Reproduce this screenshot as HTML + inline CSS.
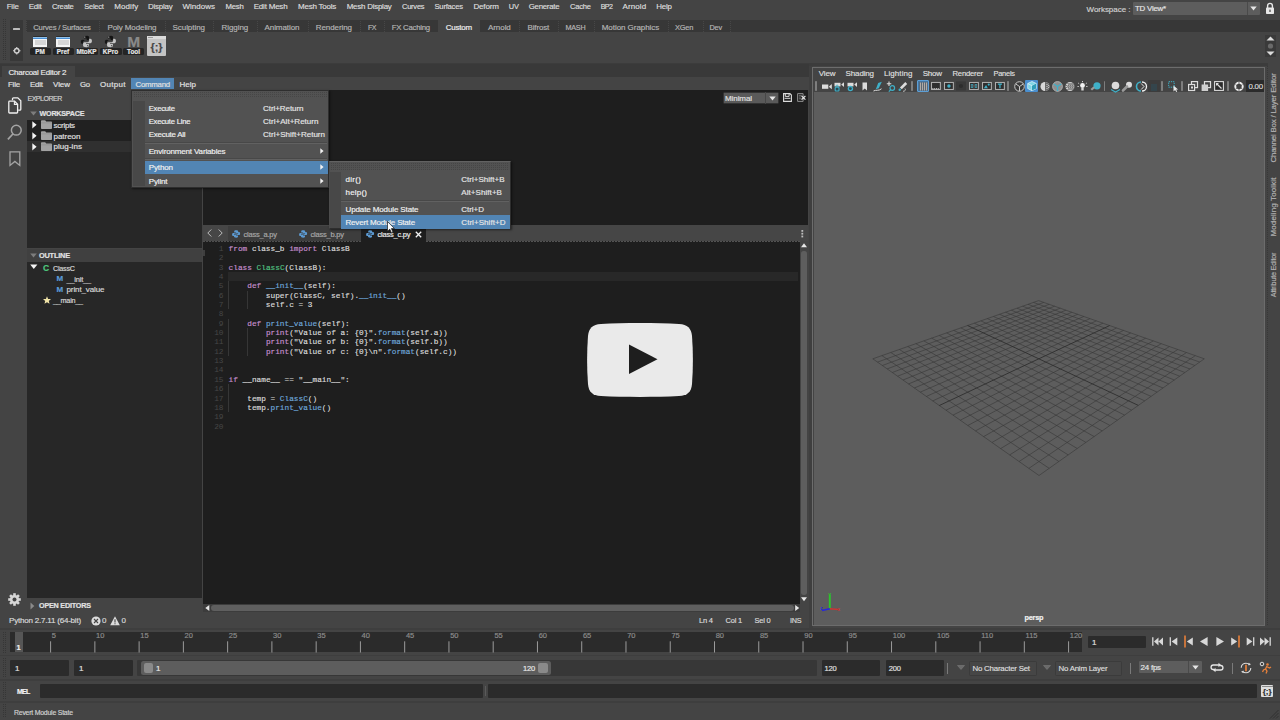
<!DOCTYPE html>
<html><head><meta charset="utf-8"><title>Charcoal Editor 2</title>
<style>
*{box-sizing:border-box;margin:0;padding:0}
html,body{width:1280px;height:720px;overflow:hidden;background:#444;font-family:"Liberation Sans",sans-serif;font-size:8px;color:#d4d4d4}
.a{position:absolute}
.t{position:absolute;white-space:pre;line-height:10px;font-size:8px;color:#d4d4d4;-webkit-text-stroke:0.180px}
.k{color:#c88fd0}.f{color:#6fa8dc}.c{color:#52c282}
svg{overflow:visible}
</style></head><body>
<div class="t" style="left:6.75px;top:1.90px;font-size:7.93px;color:#dcdcdc;letter-spacing:-0.220px;">File</div>
<div class="t" style="left:28.75px;top:1.90px;font-size:7.98px;color:#dcdcdc;letter-spacing:-0.220px;">Edit</div>
<div class="t" style="left:52px;top:1.90px;font-size:7.65px;color:#dcdcdc;letter-spacing:-0.220px;">Create</div>
<div class="t" style="left:84.25px;top:1.90px;font-size:7.45px;color:#dcdcdc;letter-spacing:-0.220px;">Select</div>
<div class="t" style="left:114.25px;top:1.90px;color:#dcdcdc;letter-spacing:0.080px;">Modify</div>
<div class="t" style="left:148px;top:1.90px;font-size:7.91px;color:#dcdcdc;letter-spacing:-0.220px;">Display</div>
<div class="t" style="left:182.5px;top:1.90px;color:#dcdcdc;letter-spacing:0.007px;">Windows</div>
<div class="t" style="left:225.5px;top:1.90px;font-size:7.78px;color:#dcdcdc;letter-spacing:-0.220px;">Mesh</div>
<div class="t" style="left:253.75px;top:1.90px;color:#dcdcdc;letter-spacing:-0.215px;">Edit Mesh</div>
<div class="t" style="left:298px;top:1.90px;color:#dcdcdc;letter-spacing:-0.219px;">Mesh Tools</div>
<div class="t" style="left:346.75px;top:1.90px;font-size:7.92px;color:#dcdcdc;letter-spacing:-0.220px;">Mesh Display</div>
<div class="t" style="left:402px;top:1.90px;font-size:7.48px;color:#dcdcdc;letter-spacing:-0.220px;">Curves</div>
<div class="t" style="left:434.5px;top:1.90px;font-size:7.64px;color:#dcdcdc;letter-spacing:-0.220px;">Surfaces</div>
<div class="t" style="left:473.5px;top:1.90px;color:#dcdcdc;letter-spacing:-0.179px;">Deform</div>
<div class="t" style="left:508.75px;top:1.90px;font-size:7.43px;color:#dcdcdc;letter-spacing:-0.220px;">UV</div>
<div class="t" style="left:528.75px;top:1.90px;font-size:7.77px;color:#dcdcdc;letter-spacing:-0.220px;">Generate</div>
<div class="t" style="left:570px;top:1.90px;font-size:7.52px;color:#dcdcdc;letter-spacing:-0.220px;">Cache</div>
<div class="t" style="left:600.75px;top:1.90px;font-size:7.04px;color:#dcdcdc;letter-spacing:-0.624px;">BP2</div>
<div class="t" style="left:622.5px;top:1.90px;color:#dcdcdc;letter-spacing:0.114px;">Arnold</div>
<div class="t" style="left:656.25px;top:1.90px;font-size:7.91px;color:#dcdcdc;letter-spacing:-0.220px;">Help</div>
<div class="t" style="left:1086.5px;top:4.80px;color:#d0d0d0;letter-spacing:-0.030px;">Workspace :</div>
<div class="a" style="left:1133px;top:2px;width:127px;height:13px;background:#5d5d5d;border-radius:1px"></div>
<div class="a" style="left:1247px;top:2px;width:1px;height:13px;background:#4a4a4a;"></div>
<div class="t" style="left:1135px;top:4.20px;font-size:7.87px;color:#e4e4e4;letter-spacing:-0.220px;">TD View*</div>
<svg class="a" style="left:1250px;top:6px;" width="7" height="5" viewBox="0 0 7 5"><path d="M0.3 0.5h6.4L3.5 4.5z" fill="#e6e6e6"/></svg>
<svg class="a" style="left:1265px;top:2px;" width="10" height="13" viewBox="0 0 10 13"><path d="M2.6 6V3.8a2.4 2.4 0 0 1 4.8 0V6" fill="none" stroke="#e8e8e8" stroke-width="1.4"/><rect x="1" y="5.6" width="8" height="6.4" rx="0.8" fill="#e8e8e8"/><rect x="4.4" y="7.6" width="1.2" height="2.4" fill="#444"/></svg>
<div class="a" style="left:25.5px;top:20px;width:1254.5px;height:12px;background:#373737;"></div>
<div class="a" style="left:10px;top:19.5px;width:13px;height:41.5px;background:#383838;"></div>
<div class="a" style="left:2px;top:19px;width:5px;height:42px;background-image:linear-gradient(90deg,#444 50%,transparent 50%),linear-gradient(#363636 50%,transparent 50%);background-size:2px 2px"></div>
<div class="a" style="left:438px;top:20px;width:42px;height:13px;background:#444;"></div>
<div class="t" style="left:33.25px;top:22.60px;font-size:7.69px;color:#b4b4b4;letter-spacing:-0.220px;">Curves / Surfaces</div>
<div class="t" style="left:107.5px;top:22.60px;color:#b4b4b4;letter-spacing:-0.100px;">Poly Modeling</div>
<div class="t" style="left:172.5px;top:22.60px;color:#b4b4b4;letter-spacing:-0.050px;">Sculpting</div>
<div class="t" style="left:221.5px;top:22.60px;color:#b4b4b4;letter-spacing:-0.060px;">Rigging</div>
<div class="t" style="left:264.5px;top:22.60px;color:#b4b4b4;letter-spacing:-0.068px;">Animation</div>
<div class="t" style="left:315.75px;top:22.60px;color:#b4b4b4;letter-spacing:-0.079px;">Rendering</div>
<div class="t" style="left:368px;top:22.60px;font-size:7.04px;color:#b4b4b4;letter-spacing:-0.504px;">FX</div>
<div class="t" style="left:391.75px;top:22.60px;font-size:7.72px;color:#b4b4b4;letter-spacing:-0.220px;">FX Caching</div>
<div class="t" style="left:445.75px;top:22.60px;font-size:7.97px;color:#f0f0f0;letter-spacing:-0.220px;">Custom</div>
<div class="t" style="left:488px;top:22.60px;color:#b4b4b4;letter-spacing:-0.068px;">Arnold</div>
<div class="t" style="left:527.5px;top:22.60px;color:#b4b4b4;letter-spacing:-0.142px;">Bifrost</div>
<div class="t" style="left:565.5px;top:22.60px;font-size:7.19px;color:#b4b4b4;letter-spacing:-0.220px;">MASH</div>
<div class="t" style="left:601.75px;top:22.60px;color:#b4b4b4;letter-spacing:-0.052px;">Motion Graphics</div>
<div class="t" style="left:675px;top:22.60px;font-size:7.43px;color:#b4b4b4;letter-spacing:-0.220px;">XGen</div>
<div class="t" style="left:709.5px;top:22.60px;font-size:7.33px;color:#b4b4b4;letter-spacing:-0.220px;">Dev</div>
<div class="a" style="left:26px;top:21px;width:1px;height:11px;background-image:linear-gradient(#474747 50%,transparent 50%);background-size:1px 2px"></div>
<div class="a" style="left:99px;top:21px;width:1px;height:11px;background-image:linear-gradient(#474747 50%,transparent 50%);background-size:1px 2px"></div>
<div class="a" style="left:164.5px;top:21px;width:1px;height:11px;background-image:linear-gradient(#474747 50%,transparent 50%);background-size:1px 2px"></div>
<div class="a" style="left:213px;top:21px;width:1px;height:11px;background-image:linear-gradient(#474747 50%,transparent 50%);background-size:1px 2px"></div>
<div class="a" style="left:256.5px;top:21px;width:1px;height:11px;background-image:linear-gradient(#474747 50%,transparent 50%);background-size:1px 2px"></div>
<div class="a" style="left:307.5px;top:21px;width:1px;height:11px;background-image:linear-gradient(#474747 50%,transparent 50%);background-size:1px 2px"></div>
<div class="a" style="left:360px;top:21px;width:1px;height:11px;background-image:linear-gradient(#474747 50%,transparent 50%);background-size:1px 2px"></div>
<div class="a" style="left:384px;top:21px;width:1px;height:11px;background-image:linear-gradient(#474747 50%,transparent 50%);background-size:1px 2px"></div>
<div class="a" style="left:519px;top:21px;width:1px;height:11px;background-image:linear-gradient(#474747 50%,transparent 50%);background-size:1px 2px"></div>
<div class="a" style="left:557.5px;top:21px;width:1px;height:11px;background-image:linear-gradient(#474747 50%,transparent 50%);background-size:1px 2px"></div>
<div class="a" style="left:594px;top:21px;width:1px;height:11px;background-image:linear-gradient(#474747 50%,transparent 50%);background-size:1px 2px"></div>
<div class="a" style="left:668px;top:21px;width:1px;height:11px;background-image:linear-gradient(#474747 50%,transparent 50%);background-size:1px 2px"></div>
<div class="a" style="left:702.5px;top:21px;width:1px;height:11px;background-image:linear-gradient(#474747 50%,transparent 50%);background-size:1px 2px"></div>
<div class="a" style="left:729.5px;top:21px;width:1px;height:11px;background-image:linear-gradient(#474747 50%,transparent 50%);background-size:1px 2px"></div>
<div class="a" style="left:13.3px;top:27.8px;width:6.5px;height:2.6px;background:#bcbcbc;border-radius:0.500px"></div>
<svg class="a" style="left:12.8px;top:46.9px;" width="7.5" height="7.5" viewBox="0 0 8 8"><circle cx="4" cy="4" r="2.4" fill="none" stroke="#d0d0d0" stroke-width="1.5"/><path d="M4 0v1.6M4 6.4v1.6M0 4h1.6M6.4 4h1.6" stroke="#d0d0d0" stroke-width="1.2"/></svg>
<div class="a" style="left:32.7px;top:36.4px;width:14.6px;height:10.6px;background:#2e2e2e;border-radius:1px"></div>
<div class="a" style="left:33px;top:36.7px;width:14px;height:10px;background:#f4f4f4;"></div>
<div class="a" style="left:33px;top:36.7px;width:14px;height:2px;background:#4a90d4;"></div>
<div class="a" style="left:33px;top:36.7px;width:14px;height:0.6px;background:#8fbfe8;"></div>
<div class="a" style="left:34.5px;top:40.2px;width:11px;height:5px;background:#d6d6d6;"></div>
<div class="a" style="left:29.5px;top:47.6px;width:21px;height:7.3px;background:#242424;border-radius:1.500px"></div>
<div class="t" style="left:40.0px;top:46.90px;font-size:6.4px;color:#e6e6e6;font-weight:700;transform:translateX(-50%);">PM</div>
<div class="a" style="left:55.7px;top:36.4px;width:14.6px;height:10.6px;background:#2e2e2e;border-radius:1px"></div>
<div class="a" style="left:56px;top:36.7px;width:14px;height:10px;background:#f4f4f4;"></div>
<div class="a" style="left:56px;top:36.7px;width:14px;height:2px;background:#4a90d4;"></div>
<div class="a" style="left:56px;top:36.7px;width:14px;height:0.6px;background:#8fbfe8;"></div>
<div class="a" style="left:57.5px;top:40.2px;width:11px;height:5px;background:#d6d6d6;"></div>
<div class="a" style="left:52.5px;top:47.6px;width:21px;height:7.3px;background:#242424;border-radius:1.500px"></div>
<div class="t" style="left:63.0px;top:46.90px;font-size:6.4px;color:#e6e6e6;font-weight:700;transform:translateX(-50%);">Pref</div>
<svg class="a" style="left:80px;top:34.8px;" width="12.5" height="12.5" viewBox="0 0 12.400 13"><path d="M6 0.500c-2.400 0-2.600 1-2.600 1.800V4H6.400v0.800H2C0.800 4.800 0.300 5.800 0.300 7.200S1 9.400 2 9.400h1.200V7.600c0-1 .8-1.800 1.800-1.800h3c.9 0 1.500-.7 1.500-1.500V2.300C9.500 1.200 8.600 0.500 6 0.500z" fill="#141414" stroke="#6a6a6a" stroke-width="0.300"/><path d="M6.400 12.800c2.400 0 2.600-1 2.600-1.800V9.300H6V8.500h4.400c1.200 0 1.700-1 1.700-2.400s-.7-2.200-1.700-2.200H9.200v1.800c0 1-.8 1.800-1.800 1.800h-3c-.9 0-1.500.7-1.500 1.500V11c0 1.100 .9 1.800 3.500 1.800z" fill="#c4c4c4"/><circle cx="4.700" cy="2.200" r="0.600" fill="#ddd"/><circle cx="7.700" cy="11.100" r="0.600" fill="#333"/></svg>
<div class="a" style="left:75.5px;top:47.6px;width:22px;height:7.3px;background:#242424;border-radius:1.500px"></div>
<div class="t" style="left:86.5px;top:46.90px;font-size:6.4px;color:#e6e6e6;font-weight:700;transform:translateX(-50%);">MtoKP</div>
<svg class="a" style="left:104px;top:34.8px;" width="12.5" height="12.5" viewBox="0 0 12.400 13"><path d="M6 0.500c-2.400 0-2.600 1-2.600 1.800V4H6.400v0.800H2C0.800 4.800 0.300 5.800 0.300 7.200S1 9.400 2 9.400h1.200V7.600c0-1 .8-1.800 1.800-1.800h3c.9 0 1.500-.7 1.500-1.500V2.300C9.500 1.200 8.600 0.500 6 0.500z" fill="#141414" stroke="#6a6a6a" stroke-width="0.300"/><path d="M6.400 12.800c2.400 0 2.600-1 2.600-1.800V9.300H6V8.500h4.400c1.200 0 1.700-1 1.700-2.400s-.7-2.200-1.700-2.200H9.200v1.800c0 1-.8 1.800-1.800 1.800h-3c-.9 0-1.500.7-1.500 1.500V11c0 1.100 .9 1.800 3.500 1.800z" fill="#c4c4c4"/><circle cx="4.700" cy="2.200" r="0.600" fill="#ddd"/><circle cx="7.700" cy="11.100" r="0.600" fill="#333"/></svg>
<div class="a" style="left:99.5px;top:47.6px;width:22px;height:7.3px;background:#242424;border-radius:1.500px"></div>
<div class="t" style="left:110.5px;top:46.90px;font-size:6.4px;color:#e6e6e6;font-weight:700;transform:translateX(-50%);">KPro</div>
<div class="t" style="left:127.3px;top:35.20px;font-size:15.5px;color:#8a8a8a;font-weight:700;line-height:14px;">M</div>
<div class="a" style="left:123px;top:47.6px;width:21px;height:7.3px;background:#242424;border-radius:1.500px"></div>
<div class="t" style="left:133.5px;top:46.90px;font-size:6.4px;color:#e6e6e6;font-weight:700;transform:translateX(-50%);">Tool</div>
<div class="a" style="left:146.5px;top:36px;width:19.5px;height:19.5px;background:#c4c4c4;border-radius:1px"></div>
<div class="a" style="left:146.5px;top:36px;width:19.5px;height:2.5px;background:#dadada;"></div>
<div class="a" style="left:148px;top:36.7px;width:5px;height:1px;background:#999;"></div>
<div class="t" style="left:156.5px;top:41.00px;font-size:11px;color:#484848;font-weight:700;line-height:12px;transform:translateX(-50%);">{;}</div>
<div class="a" style="left:1264.5px;top:34.5px;width:11px;height:22px;background:#3a3a3a;"></div>
<svg class="a" style="left:1265.5px;top:35px;" width="9" height="22" viewBox="0 0 9 22"><path d="M0.500 5.500L4.500 1.500L8.500 5.500zM0.500 16.500L4.500 20.500L8.500 16.500z" fill="#dcdcdc"/><circle cx="4.500" cy="11" r="2.600" fill="#6a6a6a"/></svg>
<div class="a" style="left:0px;top:62.8px;width:1280px;height:3.4px;background:#3c3c3c;"></div>
<div class="a" style="left:0px;top:63.5px;width:809px;height:13.3px;background:#393939;"></div>
<div class="a" style="left:2px;top:66px;width:73px;height:11.5px;background:#444;"></div>
<div class="t" style="left:8.5px;top:67.60px;font-size:7.98px;color:#e8e8e8;letter-spacing:-0.220px;">Charcoal Editor 2</div>
<div class="a" style="left:131.2px;top:77.8px;width:43px;height:11.5px;background:#5285b4;"></div>
<div class="t" style="left:8px;top:79.60px;font-size:7.93px;color:#e0e0e0;letter-spacing:-0.220px;">File</div>
<div class="t" style="left:30px;top:79.60px;font-size:7.98px;color:#e0e0e0;letter-spacing:-0.220px;">Edit</div>
<div class="t" style="left:53px;top:79.60px;color:#e0e0e0;letter-spacing:-0.058px;">View</div>
<div class="t" style="left:80px;top:79.60px;font-size:7.74px;color:#e0e0e0;letter-spacing:-0.220px;">Go</div>
<div class="t" style="left:100px;top:79.60px;color:#e0e0e0;letter-spacing:0.270px;">Output</div>
<div class="t" style="left:135.5px;top:79.60px;font-size:7.79px;color:#e0e0e0;letter-spacing:-0.220px;">Command</div>
<div class="t" style="left:179.5px;top:79.60px;color:#e0e0e0;letter-spacing:0.013px;">Help</div>
<svg class="a" style="left:8px;top:97px;" width="14" height="17" viewBox="0 0 14 17"><path d="M4.500 3.200V1.800a1 1 0 0 1 1-1h4.300l3 3v8.400a1 1 0 0 1-1 1h-1.600" fill="none" stroke="#f0f0f0" stroke-width="1.300"/><path d="M1.600 4.200h5l3 3v8a.8.8 0 0 1-.8.8H1.600a.8.8 0 0 1-.8-.8V5a.8.8 0 0 1 .8-.8z" fill="none" stroke="#f0f0f0" stroke-width="1.300"/><path d="M6.400 4.300v3.100h3.100" fill="none" stroke="#f0f0f0" stroke-width="1.100"/></svg>
<svg class="a" style="left:7px;top:124px;" width="16" height="17" viewBox="0 0 16 17"><circle cx="9.300" cy="6.200" r="4.900" fill="none" stroke="#a4a4a4" stroke-width="1.500"/><path d="M5.900 10L0.900 15.300" stroke="#a4a4a4" stroke-width="1.700"/></svg>
<svg class="a" style="left:9px;top:151px;" width="12" height="16" viewBox="0 0 12 16"><path d="M1 0.800h9.800v13.600L5.900 10.400L1 14.400z" fill="none" stroke="#a4a4a4" stroke-width="1.300"/></svg>
<svg class="a" style="left:7.5px;top:592.5px;" width="13" height="13" viewBox="0 0 13 13"><g transform="translate(6.500 6.500)"><g fill="#d6d6d6"><rect x="-1.300" y="-6.300" width="2.600" height="12.600"/><rect x="-1.300" y="-6.300" width="2.600" height="12.600" transform="rotate(45)"/><rect x="-1.300" y="-6.300" width="2.600" height="12.600" transform="rotate(90)"/><rect x="-1.300" y="-6.300" width="2.600" height="12.600" transform="rotate(135)"/><circle r="4.600"/></g><circle r="2" fill="#444"/></g></svg>
<div class="t" style="left:27.5px;top:94.40px;font-size:7.04px;color:#cfcfcf;letter-spacing:-0.513px;">EXPLORER</div>
<svg class="a" style="left:30px;top:110.5px;" width="7" height="5" viewBox="0 0 7 5"><path d="M0.200 0.500h6.600L3.500 4.400z" fill="#7d7d7d"/></svg>
<div class="t" style="left:39.5px;top:109.00px;font-size:7.17px;color:#e2e2e2;font-weight:700;letter-spacing:-0.220px;">WORKSPACE</div>
<div class="a" style="left:27px;top:120px;width:175px;height:128px;background:#272727;"></div>
<div class="a" style="left:27px;top:120px;width:175px;height:21px;background:#212121;"></div>
<div class="a" style="left:27px;top:141px;width:175px;height:11px;background:#303030;"></div>
<svg class="a" style="left:32px;top:121.3px;" width="6" height="8" viewBox="0 0 6 8"><path d="M0.300 0.300L4.600 3.800L0.300 7.400z" fill="#f4f4f4"/></svg>
<svg class="a" style="left:41px;top:120px;" width="11" height="9" viewBox="0 0 11 9"><path d="M0 1a.8.8 0 0 1 .8-.8h3.400l1 1.300h5a.8.8 0 0 1 .8.800v5.900a.8.8 0 0 1-.8.800H.8a.8.8 0 0 1-.8-.800z" fill="#a2a2a2"/><path d="M0 2.600h11v0.600H0z" fill="#8c8c8c"/></svg>
<div class="t" style="left:53.5px;top:120.90px;font-size:7.93px;color:#e0e0e0;letter-spacing:-0.220px;">scripts</div>
<svg class="a" style="left:32px;top:132.10000000000002px;" width="6" height="8" viewBox="0 0 6 8"><path d="M0.300 0.300L4.600 3.800L0.300 7.400z" fill="#f4f4f4"/></svg>
<svg class="a" style="left:41px;top:130.8px;" width="11" height="9" viewBox="0 0 11 9"><path d="M0 1a.8.8 0 0 1 .8-.8h3.400l1 1.300h5a.8.8 0 0 1 .8.800v5.900a.8.8 0 0 1-.8.800H.8a.8.8 0 0 1-.8-.800z" fill="#a2a2a2"/><path d="M0 2.600h11v0.600H0z" fill="#8c8c8c"/></svg>
<div class="t" style="left:53.5px;top:131.70px;color:#e0e0e0;letter-spacing:-0.022px;">patreon</div>
<svg class="a" style="left:32px;top:142.8px;" width="6" height="8" viewBox="0 0 6 8"><path d="M0.300 0.300L4.600 3.800L0.300 7.400z" fill="#f4f4f4"/></svg>
<svg class="a" style="left:41px;top:141.5px;" width="11" height="9" viewBox="0 0 11 9"><path d="M0 1a.8.8 0 0 1 .8-.8h3.400l1 1.300h5a.8.8 0 0 1 .8.800v5.900a.8.8 0 0 1-.8.800H.8a.8.8 0 0 1-.8-.800z" fill="#a2a2a2"/><path d="M0 2.600h11v0.600H0z" fill="#8c8c8c"/></svg>
<div class="t" style="left:53.5px;top:142.40px;color:#e0e0e0;letter-spacing:0.065px;">plug-ins</div>
<div class="a" style="left:27px;top:248.5px;width:175px;height:13.3px;background:#404040;"></div>
<svg class="a" style="left:30px;top:252.5px;" width="7" height="5" viewBox="0 0 7 5"><path d="M0.200 0.500h6.600L3.500 4.400z" fill="#7d7d7d"/></svg>
<div class="t" style="left:39px;top:250.80px;font-size:7.39px;color:#e2e2e2;font-weight:700;letter-spacing:-0.220px;">OUTLINE</div>
<div class="a" style="left:27px;top:262px;width:175px;height:336px;background:#272727;"></div>
<svg class="a" style="left:30px;top:264.3px;" width="8" height="6" viewBox="0 0 8 6"><path d="M0.200 0.500h7.200L3.800 5z" fill="#f4f4f4"/></svg>
<div class="t" style="left:43px;top:263.30px;font-size:8.5px;color:#4ec97e;font-weight:700;">C</div>
<div class="t" style="left:53px;top:263.80px;font-size:7.2px;color:#d8d8d8;letter-spacing:-0.220px;">ClassC</div>
<div class="t" style="left:56.5px;top:274.00px;color:#5b9bd8;font-weight:700;">M</div>
<div class="t" style="left:66.5px;top:274.60px;font-size:7.46px;color:#d8d8d8;letter-spacing:-0.220px;">__init__</div>
<div class="t" style="left:56.5px;top:284.60px;color:#5b9bd8;font-weight:700;">M</div>
<div class="t" style="left:66.5px;top:285.40px;color:#d8d8d8;letter-spacing:-0.109px;">print_value</div>
<svg class="a" style="left:43px;top:295.5px;" width="8" height="8" viewBox="0 0 8 8"><path d="M4 0.200L5.100 2.900L8 3.100L5.800 5L6.500 7.800L4 6.300L1.500 7.800L2.200 5L0 3.100L2.900 2.900z" fill="#f0e4a8"/></svg>
<div class="t" style="left:53px;top:296.10px;font-size:7.21px;color:#d8d8d8;letter-spacing:-0.220px;">__main__</div>
<svg class="a" style="left:30px;top:601.5px;" width="5" height="8" viewBox="0 0 5 8"><path d="M0.500 0.400L4.300 3.900L0.500 7.400z" fill="#8a8a8a"/></svg>
<div class="t" style="left:39px;top:601.10px;font-size:7.23px;color:#e2e2e2;font-weight:700;letter-spacing:-0.220px;">OPEN EDITORS</div>
<div class="t" style="left:9px;top:615.80px;color:#d8d8d8;letter-spacing:-0.202px;">Python 2.7.11 (64-bit)</div>
<svg class="a" style="left:90.5px;top:615.5px;" width="10" height="10" viewBox="0 0 10 10"><circle cx="5" cy="5" r="4.600" fill="#dcdcdc"/><path d="M3 3L7 7M7 3L3 7" stroke="#444" stroke-width="1.100"/></svg>
<div class="t" style="left:102px;top:615.80px;color:#d8d8d8;">0</div>
<svg class="a" style="left:110px;top:615.5px;" width="10" height="9.5" viewBox="0 0 10 9.5"><path d="M5 0.300L9.800 9.200H0.200z" fill="#dcdcdc"/><path d="M5 3.200v3.300M5 7.200v1.100" stroke="#444" stroke-width="1.100"/></svg>
<div class="t" style="left:121.5px;top:615.80px;color:#d8d8d8;">0</div>
<div class="t" style="left:699px;top:615.80px;font-size:7.58px;color:#d8d8d8;letter-spacing:-0.220px;">Ln 4</div>
<div class="t" style="left:725.5px;top:615.80px;font-size:7.49px;color:#d8d8d8;letter-spacing:-0.220px;">Col 1</div>
<div class="t" style="left:754.5px;top:615.80px;font-size:7.45px;color:#d8d8d8;letter-spacing:-0.220px;">Sel 0</div>
<div class="t" style="left:790px;top:615.80px;font-size:7.22px;color:#d8d8d8;letter-spacing:-0.220px;">INS</div>
<div class="a" style="left:203px;top:90px;width:605px;height:134.5px;background:#1e1e1e;"></div>
<div class="a" style="left:722.5px;top:91.5px;width:56.5px;height:12.5px;background:#5a5a5a;border:0.700px solid #333;border-radius:1.500px"></div>
<div class="a" style="left:765px;top:92px;width:0.8px;height:11.5px;background:#474747;"></div>
<div class="t" style="left:725px;top:93.90px;color:#e0e0e0;letter-spacing:-0.087px;">Minimal</div>
<svg class="a" style="left:768.5px;top:95.5px;" width="7" height="5" viewBox="0 0 7 5"><path d="M0.300 0.500h6.400L3.500 4.500z" fill="#e6e6e6"/></svg>
<svg class="a" style="left:783px;top:92.8px;" width="9" height="9" viewBox="0 0 9 9"><path d="M0.600 0.600h6.300l1.500 1.500v6.300H0.600z" fill="none" stroke="#dcdcdc" stroke-width="1.100"/><path d="M2.300 0.800v2.600h3.800V0.800M1.600 5.300h5.800" fill="none" stroke="#dcdcdc" stroke-width="1"/></svg>
<svg class="a" style="left:797px;top:92.8px;" width="9" height="9" viewBox="0 0 9 9"><path d="M0.600 0.600h5.500v7.800H0.600z" fill="none" stroke="#9a9a9a" stroke-width="0.900"/><path d="M1.800 2.300h3M1.800 4h2M1.800 5.800h3" stroke="#9a9a9a" stroke-width="0.700"/><path d="M4.600 3L8.400 6.600M8.400 3L4.600 6.600" stroke="#e8e8e8" stroke-width="1.100"/></svg>
<div class="a" style="left:203px;top:224.5px;width:605px;height:16.5px;background:#464646;"></div>
<div class="a" style="left:228px;top:225.5px;width:133px;height:15.3px;background:#3d3d3d;"></div>
<div class="a" style="left:361px;top:225.5px;width:65px;height:15.5px;background:#1e1e1e;"></div>
<svg class="a" style="left:206.5px;top:229px;" width="5" height="8" viewBox="0 0 5 8"><path d="M4.300 0.500L0.800 4L4.300 7.500" fill="none" stroke="#c8c8c8" stroke-width="0.900"/></svg>
<svg class="a" style="left:217.5px;top:229px;" width="5" height="8" viewBox="0 0 5 8"><path d="M0.700 0.500L4.200 4L0.700 7.500" fill="none" stroke="#c8c8c8" stroke-width="0.900"/></svg>
<svg class="a" style="left:232px;top:230.2px;" width="8" height="8" viewBox="0 0 8 8"><path d="M4 0.200c-1.700 0-1.800.7-1.800 1.200v1h1.900v.5H1.300C.5 2.900.100 3.500.100 4.500s.5 1.500 1.200 1.500h.8V4.800c0-.7.500-1.200 1.200-1.200h1.900c.6 0 1-.4 1-1V1.400C6.200.700 5.600.200 4 .200z" fill="#5c9ad2"/><path d="M4.200 7.800c1.700 0 1.800-.7 1.800-1.200v-1H4.100v-.5h2.800c.8 0 1.200-.6 1.200-1.600S7.600 2 6.900 2h-.8v1.200c0 .7-.5 1.200-1.200 1.200H3c-.6 0-1 .4-1 1v1.200c0 .700.600 1.200 2.200 1.200z" fill="#5c9ad2"/></svg>
<div class="t" style="left:243.5px;top:229.80px;font-size:7.53px;color:#a8a8a8;letter-spacing:-0.220px;">class_a.py</div>
<svg class="a" style="left:299px;top:230.2px;" width="8" height="8" viewBox="0 0 8 8"><path d="M4 0.200c-1.700 0-1.800.7-1.800 1.200v1h1.900v.5H1.300C.5 2.900.100 3.500.100 4.500s.5 1.500 1.200 1.500h.8V4.800c0-.7.500-1.200 1.200-1.200h1.900c.6 0 1-.4 1-1V1.400C6.200.700 5.600.200 4 .200z" fill="#5c9ad2"/><path d="M4.200 7.800c1.700 0 1.800-.7 1.800-1.200v-1H4.100v-.5h2.800c.8 0 1.200-.6 1.200-1.600S7.600 2 6.900 2h-.8v1.200c0 .7-.5 1.200-1.200 1.200H3c-.6 0-1 .4-1 1v1.200c0 .700.600 1.200 2.200 1.200z" fill="#5c9ad2"/></svg>
<div class="t" style="left:310.5px;top:229.80px;font-size:7.53px;color:#a8a8a8;letter-spacing:-0.220px;">class_b.py</div>
<svg class="a" style="left:366px;top:230.2px;" width="8" height="8" viewBox="0 0 8 8"><path d="M4 0.200c-1.700 0-1.800.7-1.800 1.200v1h1.900v.5H1.300C.5 2.900.100 3.500.100 4.500s.5 1.500 1.200 1.500h.8V4.800c0-.7.500-1.200 1.200-1.200h1.900c.6 0 1-.4 1-1V1.400C6.200.700 5.600.200 4 .200z" fill="#5c9ad2"/><path d="M4.200 7.800c1.700 0 1.800-.7 1.800-1.200v-1H4.100v-.5h2.800c.8 0 1.200-.6 1.200-1.600S7.600 2 6.900 2h-.8v1.200c0 .7-.5 1.200-1.200 1.200H3c-.6 0-1 .4-1 1v1.200c0 .700.600 1.200 2.200 1.200z" fill="#5c9ad2"/></svg>
<div class="t" style="left:377.5px;top:229.80px;font-size:7.51px;color:#ececec;letter-spacing:-0.220px;">class_c.py</div>
<svg class="a" style="left:414.5px;top:230.5px;" width="7" height="7" viewBox="0 0 7 7"><path d="M0.800 0.800L6.200 6.200M6.200 0.800L0.800 6.200" stroke="#f2f2f2" stroke-width="1.300"/></svg>
<svg class="a" style="left:801px;top:230px;" width="3" height="8" viewBox="0 0 3 8"><rect x="0.400" y="0" width="1.800" height="1.800" fill="#bdbdbd"/><rect x="0.400" y="2.800" width="1.800" height="1.800" fill="#bdbdbd"/><rect x="0.400" y="5.600" width="1.800" height="1.800" fill="#bdbdbd"/></svg>
<div class="a" style="left:203px;top:241px;width:597px;height:363px;background:#1e1e1e;"></div>
<div class="a" style="left:203px;top:240.500px;width:158px;height:1px;background-image:linear-gradient(90deg,#4e4e4e 60%,transparent 60%);background-size:3px 1px"></div>
<div class="a" style="left:426px;top:240.500px;width:374px;height:1px;background-image:linear-gradient(90deg,#525252 60%,transparent 60%);background-size:3px 1px"></div>
<div class="a" style="left:228.3px;top:272px;width:569.7px;height:9.3px;background:#282828;"></div>
<div class="a" style="left:228.3px;top:281.29px;width:0.8px;height:28.0425px;background:#363636;"></div>
<div class="a" style="left:228.3px;top:318.68px;width:0.8px;height:37.39px;background:#363636;"></div>
<div class="a" style="left:228.3px;top:384.1125px;width:0.8px;height:28.0425px;background:#363636;"></div>
<div class="a" style="left:247px;top:290.6375px;width:0.8px;height:18.695px;background:#363636;"></div>
<div class="a" style="left:247px;top:328.0275px;width:0.8px;height:28.0425px;background:#363636;"></div>
<div class="a" style="left:800px;top:241px;width:8px;height:363px;background:#444;"></div>
<svg class="a" style="left:801px;top:243px;" width="6" height="4.5" viewBox="0 0 6 4.5"><path d="M0 4.300L3 0.300L6 4.300z" fill="#e6e6e6"/></svg>
<div class="a" style="left:801.3px;top:250.5px;width:5.4px;height:344.5px;background:#5e5e5e;border-radius:2.700px"></div>
<svg class="a" style="left:801px;top:597.3px;" width="6" height="4.5" viewBox="0 0 6 4.5"><path d="M0 0.200L3 4.200L6 0.200z" fill="#e6e6e6"/></svg>
<div class="a" style="left:203px;top:604px;width:597px;height:7.5px;background:#3c3c3c;"></div>
<svg class="a" style="left:204.5px;top:605px;" width="4.5" height="6" viewBox="0 0 4.5 6"><path d="M4.300 0L0.300 3L4.300 6z" fill="#e6e6e6"/></svg>
<div class="a" style="left:211px;top:604.8px;width:582.5px;height:5.8px;background:#5f5f5f;border-radius:3px"></div>
<svg class="a" style="left:794.5px;top:605px;" width="4.5" height="6" viewBox="0 0 4.5 6"><path d="M0.200 0L4.200 3L0.200 6z" fill="#e6e6e6"/></svg>
<div class="a" style="left:203px;top:250px;width:1.5px;height:6px;background:#3f3f3f;"></div>
<pre class="a" style="left:203px;top:245.03px;width:20.500px;text-align:right;font-family:'Liberation Mono',monospace;font-size:7.780px;line-height:9.3475px;color:#464646">1
2
3
4
5
6
7
8
9
10
11
12
13
14
15
16
17
18
19
20</pre>
<pre class="a" style="left:228.600px;top:245.03px;font-family:'Liberation Mono',monospace;font-size:7.780px;line-height:9.3475px;color:#dcdcdc;-webkit-text-stroke:0.150px"><span class="k">from</span> class_b <span class="k">import</span> ClassB

<span class="k">class</span> <span class="c">ClassC</span>(ClassB):

    <span class="k">def</span> <span class="f">__init__</span>(self):
        super(ClassC, self).<span class="f">__init__</span>()
        self.c = 3

    <span class="k">def</span> <span class="f">print_value</span>(self):
        <span class="k">print</span>("Value of a: {0}".<span class="f">format</span>(self.a))
        <span class="k">print</span>("Value of b: {0}".<span class="f">format</span>(self.b))
        <span class="k">print</span>("Value of c: {0}\n".<span class="f">format</span>(self.c))


<span class="k">if</span> __name__ == "__main__":

    temp = <span class="f">ClassC</span>()
    temp.<span class="f">print_value</span>()

</pre>
<div class="a" style="left:809px;top:66px;width:3.5px;height:562px;background:#3f3f3f;"></div>
<div class="a" style="left:812.2px;top:66.5px;width:453.3px;height:559.8px;background:#444;border:1.500px solid #6c6c6c"></div>
<div class="t" style="left:818.75px;top:69.20px;color:#dedede;letter-spacing:-0.101px;">View</div>
<div class="t" style="left:845.6px;top:69.20px;color:#dedede;letter-spacing:-0.148px;">Shading</div>
<div class="t" style="left:884px;top:69.20px;color:#dedede;letter-spacing:0.062px;">Lighting</div>
<div class="t" style="left:922.75px;top:69.20px;color:#dedede;letter-spacing:-0.219px;">Show</div>
<div class="t" style="left:952.5px;top:69.20px;font-size:7.71px;color:#dedede;letter-spacing:-0.220px;">Renderer</div>
<div class="t" style="left:993.5px;top:69.20px;font-size:7.42px;color:#dedede;letter-spacing:-0.220px;">Panels</div>
<div class="a" style="left:813.7px;top:92.3px;width:450.6px;height:532.8px;background:#5d5d5d;"></div>
<div class="t" style="left:1024.5px;top:612.90px;font-size:7.34px;color:#f2f2f2;font-weight:700;letter-spacing:-0.220px;">persp</div>
<svg class="a" style="left:819px;top:592px;" width="24" height="22" viewBox="0 0 24 22"><path d="M10.800 16.800V2.600" stroke="#2cc52c" stroke-width="1.900"/><path d="M10.800 16.800l8.500 0.800" stroke="#cc3434" stroke-width="1.500"/><path d="M10.800 16.800L3 18.500" stroke="#2626dd" stroke-width="1.500"/><text x="9.300" y="4.500" font-size="4.500" fill="#2cc52c" font-family="Liberation Sans, sans-serif" font-weight="700">Y</text><text x="18.500" y="18.800" font-size="4.500" fill="#cc3434" font-family="Liberation Sans, sans-serif" font-weight="700">x</text><text x="1.600" y="18" font-size="4.500" fill="#2626dd" font-family="Liberation Sans, sans-serif" font-weight="700">z</text></svg>
<div class="a" style="left:1268px;top:62px;width:12px;height:567px;background:#444;"></div>
<div class="t" style="left:1273.5px;top:117.90px;font-size:7.95px;color:#b0b0b0;letter-spacing:-0.220px;transform:translate(-50%,-50%) rotate(-90deg);">Channel Box / Layer Editor</div>
<div class="t" style="left:1273.5px;top:207.10px;color:#b0b0b0;letter-spacing:0.115px;transform:translate(-50%,-50%) rotate(-90deg);">Modeling Toolkit</div>
<div class="t" style="left:1273.5px;top:274.85px;font-size:7.24px;color:#b0b0b0;letter-spacing:-0.220px;transform:translate(-50%,-50%) rotate(-90deg);">Attribute Editor</div>
<div class="a" style="left:1266.500px;top:66px;width:1px;height:560px;background-image:linear-gradient(#383838 50%,transparent 50%);background-size:1px 2px"></div>
<svg class="a" style="left:817px;top:92px;" width="445" height="533" viewBox="0 0 445 533"><path d="M55.8 266.8L222.0 383.5M55.8 266.8L221.6 208.6M64.9 263.6L232.1 376.3M60.5 270.1L226.8 210.4M73.8 260.5L241.9 369.5M65.3 273.5L232.2 212.3M82.4 257.5L251.2 362.9M70.2 276.9L237.6 214.2M90.8 254.5L260.2 356.5M75.3 280.5L243.2 216.2M98.9 251.7L268.9 350.4M80.6 284.2L248.9 218.2M106.9 248.9L277.2 344.6M86.0 288.0L254.8 220.3M114.6 246.1L285.2 338.9M91.6 291.9L260.7 222.3M122.2 243.5L292.9 333.4M97.3 296.0L266.8 224.5M129.6 240.9L300.4 328.2M103.3 300.1L273.0 226.7M136.8 238.4L307.6 323.1M109.4 304.4L279.4 228.9M143.8 235.9L314.6 318.2M115.7 308.9L285.9 231.2M157.3 231.2L327.8 308.9M129.0 318.2L299.5 236.0M163.8 228.9L334.1 304.4M136.0 323.1L306.5 238.4M170.2 226.6L340.2 300.1M143.3 328.2L313.7 241.0M176.4 224.5L346.0 296.0M150.8 333.5L321.0 243.6M182.5 222.3L351.8 291.9M158.5 338.9L328.6 246.2M188.5 220.2L357.3 288.0M166.6 344.6L336.3 248.9M194.3 218.2L362.7 284.2M175.0 350.5L344.3 251.7M200.0 216.2L367.9 280.5M183.6 356.6L352.4 254.6M205.6 214.2L373.0 277.0M192.7 362.9L360.8 257.5M211.0 212.3L377.9 273.5M202.1 369.5L369.4 260.6M216.4 210.4L382.7 270.1M211.8 376.4L378.2 263.7M221.6 208.6L387.3 266.8M222.0 383.5L387.3 266.8" stroke="#383838" stroke-width="0.600" fill="none"/><path d="M150.6 233.5L321.3 313.4M122.3 313.5L292.6 233.6" stroke="#2c2c2c" stroke-width="0.850" fill="none"/></svg>
<div class="a" style="left:815.3px;top:80.8px;width:1.5px;height:10.4px;background:#7e7e7e;border-radius:0.700px"></div>
<div class="a" style="left:911.3px;top:80.8px;width:1.5px;height:10.4px;background:#7e7e7e;border-radius:0.700px"></div>
<div class="a" style="left:1007.3px;top:80.8px;width:1.5px;height:10.4px;background:#7e7e7e;border-radius:0.700px"></div>
<div class="a" style="left:1103.5px;top:80.8px;width:1.5px;height:10.4px;background:#7e7e7e;border-radius:0.700px"></div>
<div class="a" style="left:1161.3px;top:80.8px;width:1.5px;height:10.4px;background:#7e7e7e;border-radius:0.700px"></div>
<div class="a" style="left:1181.3px;top:80.8px;width:1.5px;height:10.4px;background:#7e7e7e;border-radius:0.700px"></div>
<div class="a" style="left:1227.3px;top:80.8px;width:1.5px;height:10.4px;background:#7e7e7e;border-radius:0.700px"></div>
<svg class="a" style="left:822.00px;top:80.50px" width="11.00" height="11.00" viewBox="0 0 11 11"><rect x="0" y="3.500" width="6.300" height="4.300" fill="#dcdcdc"/><path d="M9.800 3v5.300L6.800 5.650z" fill="#dcdcdc"/></svg>
<svg class="a" style="left:834.00px;top:80.50px" width="11.00" height="11.00" viewBox="0 0 11 11"><rect x="0.500" y="1.800" width="6" height="3.600" fill="#dcdcdc"/><path d="M10 1.300v4.600L7.200 3.600z" fill="#dcdcdc"/><rect x="1.200" y="6.200" width="3.800" height="3.800" rx="0.700" fill="#2a4a55" stroke="#3fb0c8" stroke-width="1.100"/><path d="M2 6.200V5.200a1.100 1.100 0 0 1 2.200 0v1" fill="none" stroke="#3fb0c8" stroke-width="0.900"/></svg>
<svg class="a" style="left:847.00px;top:80.50px" width="11.00" height="11.00" viewBox="0 0 11 11"><rect x="0.500" y="1.800" width="6" height="3.600" fill="#dcdcdc"/><path d="M10 1.300v4.600L7.200 3.600z" fill="#dcdcdc"/><circle cx="3.400" cy="7.600" r="2.100" fill="#2a4a55" stroke="#3fb0c8" stroke-width="1.300"/></svg>
<svg class="a" style="left:862.00px;top:80.50px" width="6.00" height="11.00" viewBox="0 0 6 11"><path d="M0.500 1.500h4.500v8L2.750 7.500L0.500 9.500z" fill="#dcdcdc"/></svg>
<svg class="a" style="left:872.50px;top:80.50px" width="11.00" height="11.00" viewBox="0 0 11 11"><path d="M5.200 2L8.800 0.800L5.800 7.200L2.800 8.200z" fill="#3fb0c8"/><path d="M0.500 10C3 8.500 5.500 10.300 8.500 7.800" fill="none" stroke="#dcdcdc" stroke-width="1"/></svg>
<svg class="a" style="left:886.00px;top:80.50px" width="11.00" height="11.00" viewBox="0 0 11 11"><path d="M3 0.500v4.500M0.800 2.800h4.500" stroke="#dcdcdc" stroke-width="1.100"/><circle cx="6.300" cy="7" r="2.300" fill="none" stroke="#3fb0c8" stroke-width="1.200"/><path d="M4.600 8.800L2.800 10.600" stroke="#3fb0c8" stroke-width="1.200"/></svg>
<svg class="a" style="left:898.00px;top:80.50px" width="11.00" height="11.00" viewBox="0 0 11 11"><path d="M7.300 1L9.200 2.900L3.800 8.300L1.900 6.400z" fill="#dcdcdc"/><circle cx="1.700" cy="8.800" r="1.200" fill="#3fb0c8"/><path d="M5 10.300C7 10.300 8 9 7 7.500" fill="none" stroke="#dcdcdc" stroke-width="0.800"/></svg>
<div class="a" style="left:916.8px;top:80px;width:12.4px;height:12.2px;background:#4477a3;border:1px solid #5d9fd6;border-radius:1px"></div>
<svg class="a" style="left:918.5px;top:82px;" width="9" height="9" viewBox="0 0 9 9"><rect x="0.300" y="0.300" width="8.400" height="8.400" fill="#5a6772"/><path d="M1.500 0.500v8M3.500 0.500v8M5.500 0.500v8M7.500 0.500v8" stroke="#c8bcb4" stroke-width="0.800"/></svg>
<svg class="a" style="left:930.55px;top:81.05px" width="9.90" height="9.90" viewBox="0 0 11 11"><rect x="0.600" y="1.600" width="9.800" height="7.800" fill="#2e2e2e" stroke="#b4b4b4" stroke-width="1.100"/><path d="M1.500 8.500h8" stroke="#dcdcdc" stroke-width="1" stroke-dasharray="1.200 0.800"/></svg>
<svg class="a" style="left:943.55px;top:81.05px" width="9.90" height="9.90" viewBox="0 0 11 11"><rect x="0.600" y="1.600" width="9.800" height="7.800" fill="#2e2e2e" stroke="#b4b4b4" stroke-width="1.100"/><circle cx="5.500" cy="5.500" r="1.900" fill="#3fb0c8"/></svg>
<svg class="a" style="left:956.05px;top:81.05px" width="9.90" height="9.90" viewBox="0 0 11 11"><rect x="0" y="0.500" width="11" height="10" fill="#393939"/><circle cx="5.500" cy="5.500" r="2.300" fill="#2d2d2d"/></svg>
<svg class="a" style="left:968.55px;top:81.05px" width="9.90" height="9.90" viewBox="0 0 11 11"><rect x="0.600" y="1.600" width="9.800" height="7.800" fill="#2e2e2e" stroke="#b4b4b4" stroke-width="1.100"/><path d="M2 3.500h2.500v1.500H2zM6.500 3.500H9v1.500H6.500zM2 6h2.500v1.500H2zM6.500 6H9v1.500H6.500z" fill="#3fb0c8"/><path d="M5.500 2.500v6M2 5.500h7" stroke="#888" stroke-width="0.500"/></svg>
<svg class="a" style="left:981.55px;top:81.05px" width="9.90" height="9.90" viewBox="0 0 11 11"><rect x="0.600" y="1.600" width="9.800" height="7.800" fill="#2e2e2e" stroke="#b4b4b4" stroke-width="1.100"/><path d="M2 8l2.500-3.500L6.500 8z" fill="#3fb0c8"/><circle cx="7.500" cy="4" r="1.200" fill="#3fb0c8"/></svg>
<svg class="a" style="left:994.55px;top:81.05px" width="9.90" height="9.90" viewBox="0 0 11 11"><rect x="0.600" y="1.600" width="9.800" height="7.800" fill="#2e2e2e" stroke="#b4b4b4" stroke-width="1.100"/><path d="M3.200 3.500h4.600M5.500 3.500v4.500" stroke="#3fb0c8" stroke-width="1.400"/></svg>
<svg class="a" style="left:1013.50px;top:80.50px" width="11.00" height="11.00" viewBox="0 0 11 11"><circle cx="5.500" cy="5.500" r="4.800" fill="#3a3a3a" stroke="#c8c8c8" stroke-width="1"/><path d="M5.500 5.500V10M5.500 5.500L1.800 3M5.500 5.500L9.200 3" stroke="#c8c8c8" stroke-width="1"/></svg>
<div class="a" style="left:1025px;top:79.5px;width:12.5px;height:12.5px;background:#4a8fcf;border-radius:1px"></div>
<svg class="a" style="left:1026.5px;top:81px;" width="10" height="10" viewBox="0 0 10 10"><path d="M5 0.500L9.300 2.500V7.500L5 9.700L0.700 7.500V2.500z" fill="#7fd6e6" stroke="#e8f6fa" stroke-width="0.700"/><path d="M5 4.700V9.500M5 4.700L0.900 2.600M5 4.700L9.100 2.600" stroke="#e8f6fa" stroke-width="0.700"/><path d="M5 4.700L9.100 2.600V7.400L5 9.500z" fill="#2f9db8"/></svg>
<svg class="a" style="left:1039.50px;top:80.50px" width="11.00" height="11.00" viewBox="0 0 11 11"><circle cx="5" cy="5.500" r="4.500" fill="#d8d8d8"/><path d="M5 1a4.500 4.500 0 0 1 0 9z" fill="#6a6a6a"/><circle cx="7" cy="3.500" r="0.600" fill="#ddd"/><circle cx="7" cy="5.500" r="0.600" fill="#ddd"/><circle cx="7" cy="7.500" r="0.600" fill="#ddd"/><circle cx="8.500" cy="4.500" r="0.500" fill="#ddd"/><circle cx="8.500" cy="6.500" r="0.500" fill="#ddd"/></svg>
<svg class="a" style="left:1052.00px;top:80.50px" width="11.00" height="11.00" viewBox="0 0 11 11"><circle cx="5.500" cy="5.500" r="4.900" fill="#8f8f8f" stroke="#bdbdbd" stroke-width="0.800"/><path d="M5.500 5.500V10M5.500 5.500L1.800 3M5.500 5.500L9.200 3" stroke="#3fb0c8" stroke-width="1.300"/></svg>
<svg class="a" style="left:1065.00px;top:80.50px" width="11.00" height="11.00" viewBox="0 0 11 11"><circle cx="5" cy="5.500" r="4.500" fill="#d0d0d0"/><path d="M1.500 2.500h7M0.700 4.500h8.600M0.700 6.500h8.600M1.500 8.500h7" stroke="#505050" stroke-width="1" stroke-dasharray="1 1"/><path d="M2.500 3.500h6M1.500 5.500h8M2.500 7.500h6" stroke="#505050" stroke-width="1" stroke-dasharray="1 1" stroke-dashoffset="1"/></svg>
<svg class="a" style="left:1077.00px;top:80.50px" width="11.00" height="11.00" viewBox="0 0 11 11"><circle cx="5.500" cy="4.500" r="2.400" fill="#f2f2f2"/><rect x="4.300" y="6.500" width="2.400" height="3" fill="#d8d8d8"/><path d="M5.500 0v1.200M1.200 2l1 .8M9.800 2l-1 .8M0.500 5.500h1.300M9.200 5.500h1.300" stroke="#f2f2f2" stroke-width="0.800"/></svg>
<svg class="a" style="left:1089.50px;top:80.50px" width="11.00" height="11.00" viewBox="0 0 11 11"><circle cx="7" cy="4.800" r="3.600" fill="#3fb0c8"/><path d="M0.500 8l3-2.500 1.500 1.500-3 2.500z" fill="#9a9a9a"/></svg>
<svg class="a" style="left:1109.50px;top:80.50px" width="11.00" height="11.00" viewBox="0 0 11 11"><circle cx="5.500" cy="4.500" r="3.800" fill="#dcdcdc"/><path d="M1 8.500L5.500 11L10 8.500" fill="none" stroke="#3fb0c8" stroke-width="1.100"/></svg>
<svg class="a" style="left:1122.00px;top:80.50px" width="11.00" height="11.00" viewBox="0 0 11 11"><circle cx="7" cy="3.800" r="3" fill="#dcdcdc"/><path d="M1 9.500L5 5.500" stroke="#9a9a9a" stroke-width="2.600" stroke-linecap="round"/></svg>
<svg class="a" style="left:1135.50px;top:80.50px" width="11.00" height="11.00" viewBox="0 0 11 11"><path d="M5 1A4.500 4.500 0 0 0 5 10" fill="none" stroke="#3fb0c8" stroke-width="1.600"/><path d="M6 1A4.500 4.500 0 0 1 6 10" fill="none" stroke="#f0f0f0" stroke-width="1.300"/><path d="M5.200 2.500L8 5.500L5.200 8.500" fill="none" stroke="#f0f0f0" stroke-width="0.900"/></svg>
<div class="a" style="left:1147.5px;top:80px;width:12px;height:12px;background:#3c3c3c;"></div>
<div class="a" style="left:1151px;top:84px;width:6px;height:6.5px;background:#34454c;"></div>
<svg class="a" style="left:1168.00px;top:80.50px" width="11.00" height="11.00" viewBox="0 0 11 11"><rect x="0.700" y="0.700" width="5.500" height="5.500" fill="none" stroke="#3fb0c8" stroke-width="1" stroke-dasharray="1.300 0.900"/><path d="M5.500 4.500v6l1.600-1.400 1.100 2 1-.5-1.100-2h2z" fill="#e8e8e8"/></svg>
<svg class="a" style="left:1188.00px;top:80.50px" width="11.00" height="11.00" viewBox="0 0 11 11"><rect x="3.500" y="0.600" width="6" height="6" fill="#444" stroke="#dcdcdc" stroke-width="1.200"/><rect x="0.600" y="3.500" width="6" height="6" fill="#444" stroke="#dcdcdc" stroke-width="1.200"/><rect x="3" y="5.500" width="2" height="2" fill="#dcdcdc"/></svg>
<svg class="a" style="left:1200.50px;top:80.50px" width="11.00" height="11.00" viewBox="0 0 11 11"><rect x="3.500" y="0.600" width="6" height="6" fill="#444" stroke="#dcdcdc" stroke-width="1.200"/><rect x="0.600" y="3.500" width="6.500" height="6.500" fill="#cfcfcf"/></svg>
<svg class="a" style="left:1213.50px;top:81.00px" width="10.00" height="10.00" viewBox="0 0 10 10"><rect x="0.600" y="0.600" width="8.800" height="8.800" fill="#2b2b2b" stroke="#dcdcdc" stroke-width="1.100"/><path d="M2.500 2.500L7.500 7.500" stroke="#dcdcdc" stroke-width="1.300"/><path d="M2 2h3L2 5z" fill="#dcdcdc"/></svg>
<svg class="a" style="left:1233.50px;top:80.50px" width="11.00" height="11.00" viewBox="0 0 11 11"><circle cx="5" cy="5.500" r="3.700" fill="none" stroke="#ececec" stroke-width="2"/><path d="M5 1v2.500M1.500 3.500l2 1.500M1.500 8l2-1.200M5 10V7.500M8.500 8l-2-1.200M8.500 3.500l-2 1.500" stroke="#444" stroke-width="0.700"/></svg>
<div class="a" style="left:1245.5px;top:80px;width:18.5px;height:12px;background:#2b2b2b;"></div>
<div class="t" style="left:1248.5px;top:82.00px;font-size:7.84px;color:#dcdcdc;letter-spacing:-0.220px;">0.00</div>
<div class="a" style="left:0px;top:628px;width:1280px;height:2px;background:#3e3e3e;"></div>
<div class="a" style="left:2px;top:632px;width:5px;height:22px;background-image:linear-gradient(90deg,#444 50%,transparent 50%),linear-gradient(#363636 50%,transparent 50%);background-size:2px 2px"></div>
<div class="a" style="left:2px;top:658px;width:5px;height:20px;background-image:linear-gradient(90deg,#444 50%,transparent 50%),linear-gradient(#363636 50%,transparent 50%);background-size:2px 2px"></div>
<div class="a" style="left:2px;top:682px;width:5px;height:18px;background-image:linear-gradient(90deg,#444 50%,transparent 50%),linear-gradient(#363636 50%,transparent 50%);background-size:2px 2px"></div>
<div class="a" style="left:2px;top:704px;width:5px;height:14px;background-image:linear-gradient(90deg,#444 50%,transparent 50%),linear-gradient(#363636 50%,transparent 50%);background-size:2px 2px"></div>
<div class="a" style="left:10px;top:631.5px;width:1072px;height:20.5px;background:#2b2b2b;"></div>
<div class="a" style="left:15px;top:632px;width:8px;height:19.5px;background:#565656;"></div>
<div class="t" style="left:16.5px;top:642.60px;font-size:7.5px;color:#f0f0f0;font-weight:700;">1</div>
<div class="t" style="left:51.800000000000004px;top:631.20px;font-size:7.5px;color:#8c8c8c;">5</div>
<div class="t" style="left:96.06000000000002px;top:631.20px;font-size:7.5px;color:#8c8c8c;">10</div>
<div class="t" style="left:140.32px;top:631.20px;font-size:7.5px;color:#8c8c8c;">15</div>
<div class="t" style="left:184.57999999999998px;top:631.20px;font-size:7.5px;color:#8c8c8c;">20</div>
<div class="t" style="left:228.84px;top:631.20px;font-size:7.5px;color:#8c8c8c;">25</div>
<div class="t" style="left:273.1px;top:631.20px;font-size:7.5px;color:#8c8c8c;">30</div>
<div class="t" style="left:317.36px;top:631.20px;font-size:7.5px;color:#8c8c8c;">35</div>
<div class="t" style="left:361.62px;top:631.20px;font-size:7.5px;color:#8c8c8c;">40</div>
<div class="t" style="left:405.88000000000005px;top:631.20px;font-size:7.5px;color:#8c8c8c;">45</div>
<div class="t" style="left:450.14000000000004px;top:631.20px;font-size:7.5px;color:#8c8c8c;">50</div>
<div class="t" style="left:494.40000000000003px;top:631.20px;font-size:7.5px;color:#8c8c8c;">55</div>
<div class="t" style="left:538.6600000000001px;top:631.20px;font-size:7.5px;color:#8c8c8c;">60</div>
<div class="t" style="left:582.9200000000001px;top:631.20px;font-size:7.5px;color:#8c8c8c;">65</div>
<div class="t" style="left:627.1800000000001px;top:631.20px;font-size:7.5px;color:#8c8c8c;">70</div>
<div class="t" style="left:671.44px;top:631.20px;font-size:7.5px;color:#8c8c8c;">75</div>
<div class="t" style="left:715.7px;top:631.20px;font-size:7.5px;color:#8c8c8c;">80</div>
<div class="t" style="left:759.9600000000002px;top:631.20px;font-size:7.5px;color:#8c8c8c;">85</div>
<div class="t" style="left:804.2200000000001px;top:631.20px;font-size:7.5px;color:#8c8c8c;">90</div>
<div class="t" style="left:848.4800000000001px;top:631.20px;font-size:7.5px;color:#8c8c8c;">95</div>
<div class="t" style="left:892.7400000000001px;top:631.20px;font-size:7.5px;color:#8c8c8c;">100</div>
<div class="t" style="left:937.0000000000001px;top:631.20px;font-size:7.5px;color:#8c8c8c;">105</div>
<div class="t" style="left:981.2600000000001px;top:631.20px;font-size:7.5px;color:#8c8c8c;">110</div>
<div class="t" style="left:1025.52px;top:631.20px;font-size:7.5px;color:#8c8c8c;">115</div>
<div class="t" style="left:1069.78px;top:631.20px;font-size:7.5px;color:#8c8c8c;">120</div>
<svg class="a" style="left:10px;top:631.5px;" width="1072" height="20.5" viewBox="0 0 1072 20.5"><path d="M40.60 9.300V20.500M84.86 9.300V20.500M129.12 9.300V20.500M173.38 9.300V20.500M217.64 9.300V20.500M261.90 9.300V20.500M306.16 9.300V20.500M350.42 9.300V20.500M394.68 9.300V20.500M438.94 9.300V20.500M483.20 9.300V20.500M527.46 9.300V20.500M571.72 9.300V20.500M615.98 9.300V20.500M660.24 9.300V20.500M704.50 9.300V20.500M748.76 9.300V20.500M793.02 9.300V20.500M837.28 9.300V20.500M881.54 9.300V20.500M925.80 9.300V20.500M970.06 9.300V20.500M1014.32 9.300V20.500M1058.58 9.300V20.500" stroke="#a8a8a8" stroke-width="0.900" fill="none"/></svg>
<div class="a" style="left:1088px;top:636px;width:58px;height:11.5px;background:#2b2b2b;border-radius:1px"></div>
<div class="t" style="left:1092px;top:637.60px;color:#e0e0e0;">1</div>
<svg class="a" style="left:1150.75px;top:635.5px;" width="14" height="11" viewBox="0 0 14 11"><path d="M1.800 1.200v8.600" stroke="#d8d8d8" stroke-width="1.300"/><path d="M7.500 1.600v7.800L3 5.500zM12 1.600v7.800L7.500 5.500z" fill="#d8d8d8"/></svg>
<svg class="a" style="left:1166.5px;top:635.5px;" width="14" height="11" viewBox="0 0 14 11"><path d="M3.300 1.200v8.600" stroke="#d8d8d8" stroke-width="1.300"/><path d="M10.300 1.600v7.800L4.600 5.500z" fill="#d8d8d8"/></svg>
<svg class="a" style="left:1181.5px;top:635.5px;" width="14" height="11" viewBox="0 0 14 11"><path d="M3 -0.500v12" stroke="#e8803a" stroke-width="1.600"/><path d="M10.800 1.600v7.800L4.800 5.500z" fill="#d8d8d8"/></svg>
<svg class="a" style="left:1197px;top:635.5px;" width="14" height="11" viewBox="0 0 14 11"><path d="M10.600 1v9L3 5.500z" fill="#d8d8d8"/></svg>
<svg class="a" style="left:1212.5px;top:635.5px;" width="14" height="11" viewBox="0 0 14 11"><path d="M3.400 1v9L11 5.500z" fill="#d8d8d8"/></svg>
<svg class="a" style="left:1227.5px;top:635.5px;" width="14" height="11" viewBox="0 0 14 11"><path d="M11 -0.500v12" stroke="#e8803a" stroke-width="1.600"/><path d="M3.200 1.600v7.800L9.200 5.500z" fill="#d8d8d8"/></svg>
<svg class="a" style="left:1242.6px;top:635.5px;" width="14" height="11" viewBox="0 0 14 11"><path d="M10.700 1.200v8.600" stroke="#d8d8d8" stroke-width="1.300"/><path d="M3.700 1.600v7.800L9.400 5.500z" fill="#d8d8d8"/></svg>
<svg class="a" style="left:1258px;top:635.5px;" width="14" height="11" viewBox="0 0 14 11"><path d="M12.200 1.200v8.600" stroke="#d8d8d8" stroke-width="1.300"/><path d="M2 1.600v7.800L6.500 5.500zM6.500 1.600v7.800L11 5.500z" fill="#d8d8d8"/></svg>
<div class="a" style="left:0px;top:654.5px;width:1280px;height:1.5px;background:#3e3e3e;"></div>
<div class="a" style="left:10px;top:660px;width:58.5px;height:15.5px;background:#2b2b2b;border-radius:1px"></div>
<div class="a" style="left:74px;top:660px;width:58.5px;height:15.5px;background:#2b2b2b;border-radius:1px"></div>
<div class="t" style="left:15px;top:663.60px;color:#e0e0e0;">1</div>
<div class="t" style="left:79px;top:663.60px;color:#e0e0e0;">1</div>
<div class="a" style="left:137px;top:659.5px;width:680px;height:16.5px;background:#373737;border-radius:1px"></div>
<div class="a" style="left:141px;top:660.5px;width:409.5px;height:14.5px;background:#5d5d5d;border-radius:2.500px"></div>
<div class="a" style="left:143.5px;top:662.5px;width:9.5px;height:10.5px;background:#8a8a8a;border-radius:2px"></div>
<div class="a" style="left:538px;top:662.5px;width:9.5px;height:10.5px;background:#8a8a8a;border-radius:2px"></div>
<div class="t" style="left:156px;top:663.60px;color:#e8e8e8;">1</div>
<div class="t" style="left:523px;top:663.60px;font-size:7.52px;color:#e8e8e8;letter-spacing:-0.220px;">120</div>
<div class="a" style="left:821.5px;top:660px;width:58.5px;height:15.5px;background:#2b2b2b;border-radius:1px"></div>
<div class="a" style="left:885.5px;top:660px;width:58.5px;height:15.5px;background:#2b2b2b;border-radius:1px"></div>
<div class="t" style="left:824.5px;top:663.60px;font-size:7.52px;color:#e0e0e0;letter-spacing:-0.220px;">120</div>
<div class="t" style="left:888.8px;top:663.60px;font-size:7.52px;color:#e0e0e0;letter-spacing:-0.220px;">200</div>
<div class="a" style="left:947px;top:662.5px;width:1.2px;height:11px;background:#7a7a7a;"></div>
<div class="a" style="left:1129.5px;top:662.5px;width:1.2px;height:11px;background:#7a7a7a;"></div>
<div class="a" style="left:1231.5px;top:662.5px;width:1.2px;height:11px;background:#7a7a7a;"></div>
<svg class="a" style="left:957px;top:664.5px;" width="8" height="5" viewBox="0 0 8 5"><path d="M0.500 0.500h7L4 4.500z" fill="#6a6a6a" stroke="#808080" stroke-width="0.500"/></svg>
<div class="a" style="left:969px;top:660.5px;width:68px;height:15px;background:#464646;border:1px solid #3b3b3b;border-radius:1.500px"></div>
<div class="t" style="left:972.5px;top:663.60px;font-size:7.88px;color:#dcdcdc;letter-spacing:-0.220px;">No Character Set</div>
<svg class="a" style="left:1043px;top:664.5px;" width="8" height="5" viewBox="0 0 8 5"><path d="M0.500 0.500h7L4 4.500z" fill="#6a6a6a" stroke="#808080" stroke-width="0.500"/></svg>
<div class="a" style="left:1055px;top:660.5px;width:67px;height:15px;background:#464646;border:1px solid #3b3b3b;border-radius:1.500px"></div>
<div class="t" style="left:1058.5px;top:663.60px;font-size:7.89px;color:#dcdcdc;letter-spacing:-0.220px;">No Anim Layer</div>
<div class="a" style="left:1139px;top:661px;width:62.5px;height:12px;background:#5d5d5d;border-radius:1px"></div>
<div class="a" style="left:1188px;top:661px;width:0.8px;height:12px;background:#4a4a4a;"></div>
<div class="t" style="left:1140.5px;top:663.10px;font-size:7.97px;color:#e4e4e4;letter-spacing:-0.220px;">24 fps</div>
<svg class="a" style="left:1191.5px;top:665px;" width="7" height="5" viewBox="0 0 7 5"><path d="M0.300 0.500h6.400L3.500 4.500z" fill="#e6e6e6"/></svg>
<svg class="a" style="left:1210.5px;top:662px;" width="12" height="11" viewBox="0 0 12 11"><path d="M3 7.500H2.300a2 2 0 0 1 0-4.500h6" fill="none" stroke="#e6e6e6" stroke-width="1.300"/><path d="M7.500 0.800L10 3L7.500 5.200z" fill="#e6e6e6"/><path d="M9 3.500h.700a2 2 0 0 1 0 4.500h-6" fill="none" stroke="#e6e6e6" stroke-width="1.300"/><path d="M4.500 5.800L2 8L4.500 10.200z" fill="#e6e6e6"/></svg>
<svg class="a" style="left:1240px;top:662px;" width="12" height="12" viewBox="0 0 12 12"><circle cx="6" cy="6" r="4.800" fill="none" stroke="#dcdcdc" stroke-width="1.100" stroke-dasharray="11 4"/><path d="M6 2.800v6.400" stroke="#e8803a" stroke-width="1.700"/><path d="M8.500 0.800l2.500 1.500-2.500 1.300zM3.500 11.200L1 9.700l2.500-1.300z" fill="#dcdcdc"/></svg>
<svg class="a" style="left:1259px;top:661px;" width="13" height="13" viewBox="0 0 13 13"><circle cx="3" cy="3" r="1.800" fill="none" stroke="#dcdcdc" stroke-width="1"/><circle cx="8.500" cy="3.500" r="1.300" fill="#e8803a"/><path d="M8 5L6.500 8L8 10L7 12.500M7.500 5.500L10.500 7L12 6M6.500 8L4.500 9L3.500 11" fill="none" stroke="#e8803a" stroke-width="1.300"/></svg>
<div class="a" style="left:0px;top:679px;width:1280px;height:1.5px;background:#3e3e3e;"></div>
<div class="t" style="left:17px;top:686.90px;font-size:7.04px;color:#f0f0f0;font-weight:700;letter-spacing:-0.745px;">MEL</div>
<div class="a" style="left:40px;top:683.8px;width:443px;height:14.7px;background:#2b2b2b;border-radius:1px"></div>
<div class="a" style="left:485px;top:686px;width:1px;height:10px;background:#5a5a5a;"></div>
<div class="a" style="left:488px;top:683.8px;width:769px;height:14.7px;background:#2b2b2b;border-radius:1px"></div>
<div class="a" style="left:1260.8px;top:685px;width:12.7px;height:12.3px;background:#dedede;border-radius:1px"></div>
<div class="a" style="left:1261.5px;top:686.3px;width:11.3px;height:0.9px;background:#8a8a8a;"></div>
<div class="t" style="left:1267.2px;top:687.30px;color:#2c2c2c;font-weight:700;transform:translateX(-50%);">{;}</div>
<div class="a" style="left:0px;top:701px;width:1280px;height:1.5px;background:#3e3e3e;"></div>
<div class="t" style="left:14px;top:707.60px;font-size:6.92px;color:#d0d0d0;letter-spacing:-0.220px;">Revert Module State</div>
<svg class="a" style="left:1268px;top:708px;" width="11" height="11" viewBox="0 0 11 11"><path d="M10.500 2L2 10.500M10.500 5L5 10.500M10.500 8L8 10.500" stroke="#2f2f2f" stroke-width="0.900"/></svg>
<div class="a" style="left:131px;top:90px;width:197.5px;height:97.5px;background:#525252;border:1px solid #2e2e2e;box-shadow:1px 1px 2px rgba(0,0,0,0.500)"></div>
<div class="a" style="left:133px;top:92px;width:194px;height:6px;background-color:#525252;background-image:linear-gradient(90deg,rgba(82,82,82,1) 50%,transparent 50%),linear-gradient(#464646 50%,transparent 50%);background-size:2px 2px;"></div>
<div class="a" style="left:133px;top:101px;width:12px;height:85px;background:#484848;"></div>
<div class="a" style="left:145px;top:142.2px;width:182px;height:0.8px;background:#484848;"></div>
<div class="a" style="left:145px;top:143px;width:182px;height:1px;background:#616161;"></div>
<div class="a" style="left:145px;top:158px;width:182px;height:0.8px;background:#484848;"></div>
<div class="a" style="left:145px;top:158.8px;width:182px;height:1px;background:#616161;"></div>
<div class="a" style="left:145px;top:161px;width:183px;height:13px;background:#5285b4;"></div>
<div class="t" style="left:148.7px;top:103.50px;font-size:7.67px;color:#f0f0f0;letter-spacing:-0.220px;">Execute</div>
<div class="t" style="left:263px;top:103.50px;color:#e4e4e4;letter-spacing:-0.060px;">Ctrl+Return</div>
<div class="t" style="left:148.7px;top:116.70px;font-size:7.67px;color:#f0f0f0;letter-spacing:-0.220px;">Execute Line</div>
<div class="t" style="left:263px;top:116.70px;color:#e4e4e4;letter-spacing:0.025px;">Ctrl+Alt+Return</div>
<div class="t" style="left:148.7px;top:130.00px;font-size:7.91px;color:#f0f0f0;letter-spacing:-0.220px;">Execute All</div>
<div class="t" style="left:263px;top:130.00px;color:#e4e4e4;letter-spacing:0.011px;">Ctrl+Shift+Return</div>
<div class="t" style="left:148.7px;top:146.90px;color:#f0f0f0;letter-spacing:-0.151px;">Environment Variables</div>
<svg class="a" style="left:319.5px;top:147.5px;" width="4" height="6" viewBox="0 0 4 6"><path d="M0.300 0.200L3.600 3L0.300 5.800z" fill="#f2f2f2"/></svg>
<div class="t" style="left:148.7px;top:163.20px;color:#f0f0f0;letter-spacing:-0.110px;">Python</div>
<svg class="a" style="left:319.5px;top:163.79999999999998px;" width="4" height="6" viewBox="0 0 4 6"><path d="M0.300 0.200L3.600 3L0.300 5.800z" fill="#f2f2f2"/></svg>
<div class="t" style="left:148.7px;top:177.10px;color:#f0f0f0;letter-spacing:-0.139px;">Pylint</div>
<svg class="a" style="left:319.5px;top:177.7px;" width="4" height="6" viewBox="0 0 4 6"><path d="M0.300 0.200L3.600 3L0.300 5.800z" fill="#f2f2f2"/></svg>
<div class="a" style="left:328.5px;top:160.8px;width:182px;height:68.2px;background:#525252;border:1px solid #2e2e2e;border-top-color:#626262;border-left-color:#4c4c4c;box-shadow:1px 1px 2px rgba(0,0,0,0.500)"></div>
<div class="a" style="left:330px;top:163px;width:179px;height:7px;background-color:#525252;background-image:linear-gradient(90deg,rgba(82,82,82,1) 50%,transparent 50%),linear-gradient(#464646 50%,transparent 50%);background-size:2px 2px;"></div>
<div class="a" style="left:330px;top:172px;width:11px;height:56px;background:#484848;"></div>
<div class="a" style="left:341px;top:200.2px;width:168px;height:0.8px;background:#484848;"></div>
<div class="a" style="left:341px;top:201px;width:168px;height:1px;background:#616161;"></div>
<div class="a" style="left:341px;top:215.3px;width:168.5px;height:13.4px;background:#5285b4;"></div>
<div class="t" style="left:345.5px;top:174.90px;color:#f0f0f0;letter-spacing:0.285px;">dir()</div>
<div class="t" style="left:461.3px;top:174.90px;color:#e4e4e4;letter-spacing:0.005px;">Ctrl+Shift+B</div>
<div class="t" style="left:345.5px;top:188.00px;color:#f0f0f0;letter-spacing:0.190px;">help()</div>
<div class="t" style="left:461.3px;top:188.00px;color:#e4e4e4;letter-spacing:0.064px;">Alt+Shift+B</div>
<div class="t" style="left:345.5px;top:205.10px;color:#f0f0f0;letter-spacing:-0.117px;">Update Module State</div>
<div class="t" style="left:461.3px;top:205.10px;color:#e4e4e4;letter-spacing:-0.035px;">Ctrl+D</div>
<div class="t" style="left:345.5px;top:218.10px;color:#f0f0f0;letter-spacing:-0.186px;">Revert Module State</div>
<div class="t" style="left:461.3px;top:218.10px;color:#e4e4e4;letter-spacing:0.054px;">Ctrl+Shift+D</div>
<svg class="a" style="left:387.2px;top:221.2px;" width="8" height="13" viewBox="0 0 8 13"><path d="M0.500 0.500V10.300L2.800 8.200L4.500 12L6 11.300L4.400 7.500H7.400z" fill="#fff" stroke="#151515" stroke-width="0.700"/></svg>
<svg class="a" style="left:587px;top:323px;" width="106" height="74" viewBox="0 0 106 74"><path d="M14 0.900C37 -0.300 69 -0.300 92 0.900C100.500 1.400 104.300 5 105 13C106.200 29 106.200 45 105 61C104.300 69 100.500 72.600 92 73.100C69 74.300 37 74.300 14 73.100C5.500 72.600 1.700 69 1 61C-0.200 45 -0.200 29 1 13C1.700 5 5.500 1.400 14 0.900z" fill="#eaeaea"/><path d="M42 21.500V51L70.500 36.200z" fill="#1e1e1e"/></svg>
</body></html>
